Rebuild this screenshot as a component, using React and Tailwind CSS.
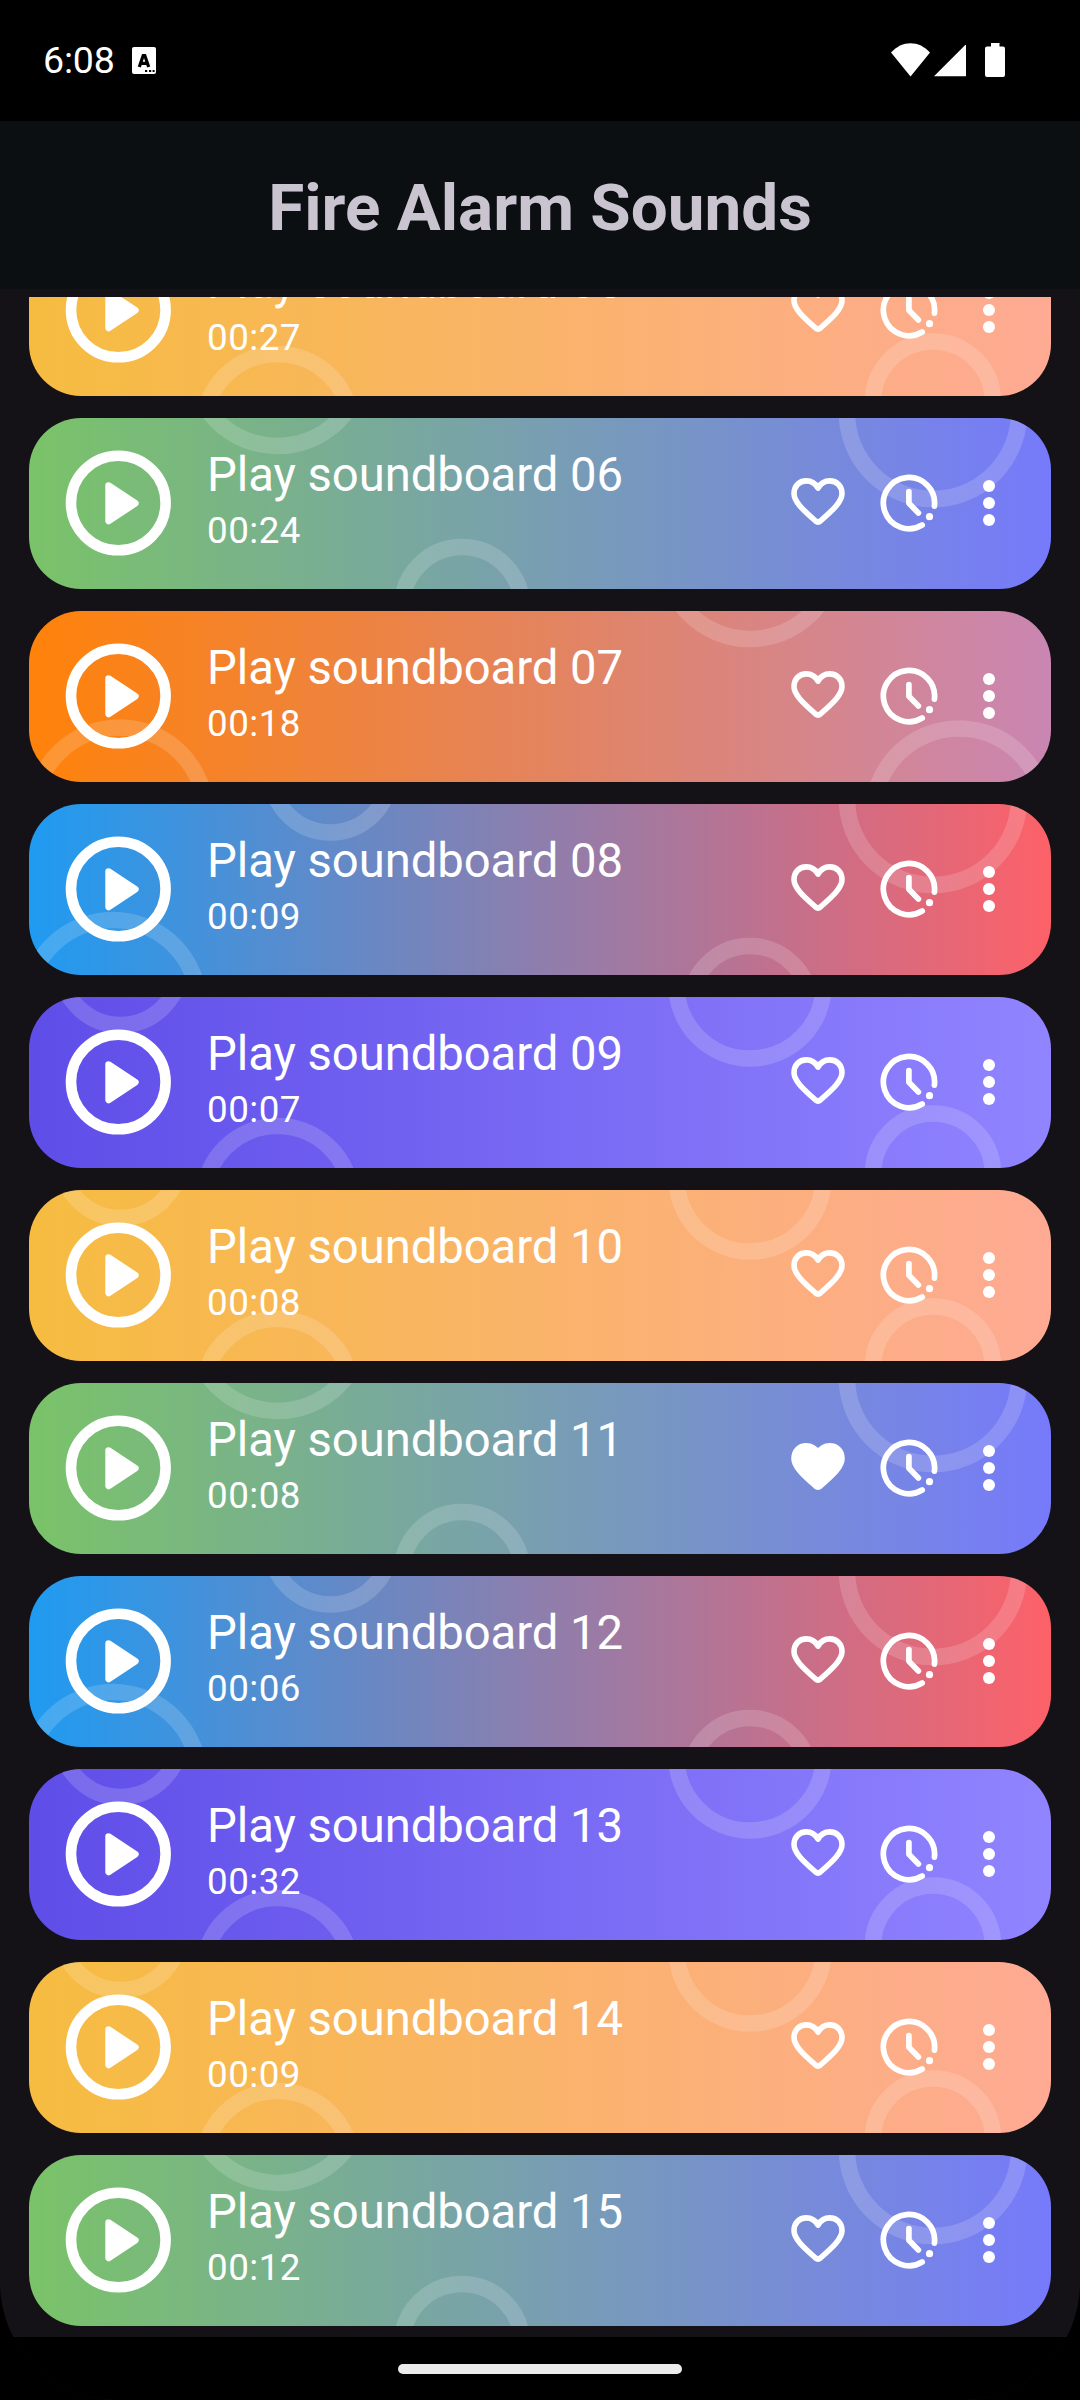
const THEMES = {
  yellow: {
    bg: "bg-[linear-gradient(90deg,#f6bc40,#feaa94)]",
    rings: [
      [91.5, -32, 60],
      [721, -12, 73.5],
      [248.5, 203, 74],
      [904, 176.5, 60],
    ],
  },
  green: {
    bg: "bg-[linear-gradient(90deg,#7ac368,#767afb)]",
    rings: [
      [248.5, -58, 86],
      [904, -5, 86],
      [433, 189, 60],
    ],
  },
  orange: {
    bg: "bg-[linear-gradient(90deg,#ff820a,#c986b2)]",
    rings: [
      [721, -58, 86],
      [90.5, 202.5, 86],
      [930, 203.5, 86],
    ],
  },
  blue: {
    bg: "bg-[linear-gradient(90deg,#1f9bf1,#fd6168)]",
    rings: [
      [301.5, -31.5, 60],
      [904, -5, 86],
      [84, 202, 86],
      [721, 202, 60],
    ],
  },
  purple: {
    bg: "bg-[linear-gradient(90deg,#5f4de8,#9184ff)]",
    rings: [
      [91.5, -32, 60],
      [721, -12, 73.5],
      [248.5, 203, 74],
      [904, 176.5, 60],
    ],
  },
};

const SOUNDS = [
  { id: "05", time: "00:27", theme: "yellow" },
  { id: "06", time: "00:24", theme: "green" },
  { id: "07", time: "00:18", theme: "orange" },
  { id: "08", time: "00:09", theme: "blue" },
  { id: "09", time: "00:07", theme: "purple" },
  { id: "10", time: "00:08", theme: "yellow" },
  { id: "11", time: "00:08", theme: "green", liked: true },
  { id: "12", time: "00:06", theme: "blue" },
  { id: "13", time: "00:32", theme: "purple" },
  { id: "14", time: "00:09", theme: "yellow" },
  { id: "15", time: "00:12", theme: "green" },
];

function StatusBar() {
  return (
    <header className="flex h-[121px] shrink-0 items-center justify-between bg-black pr-[75px] pb-[1px] pl-[43px] text-white">
      <div className="flex items-center">
        <span className="text-[37.5px] leading-[44px] tracking-[-0.2px]">6:08</span>
        <svg className="ml-[17px] h-[27px] w-[24px]" viewBox="0 0 24 27">
          <rect width="24" height="27" rx="2" fill="#fff" />
          <path
            d="M7.3 20 L11.2 8.5 H12.8 L16.7 20 M8.8 16.3 H15.2"
            fill="none"
            stroke="#000"
            strokeWidth="3.2"
          />
          <path d="M13 23h2.2v2H13zM17 23h2.2v2H17zM20.6 23h2v2h-2z" fill="#000" />
        </svg>
      </div>
      <div className="flex items-center">
        <svg className="h-[34px] w-[39px]" viewBox="0 0 39 34" fill="#fff">
          <path d="M0 9.5 C11 -3 28 -3 39 9.5 L19.5 33.5 Z" />
        </svg>
        <svg className="ml-[3.5px] h-[34px] w-[32.5px]" viewBox="0 0 33 34" fill="#fff">
          <path d="M33 0.5 V33.5 H0 Z" />
        </svg>
        <svg className="ml-[19px] h-[34px] w-[20px]" viewBox="0 0 20 34" fill="#fff">
          <rect x="6" y="0" width="8.5" height="6" />
          <rect x="0" y="3.5" width="20" height="30.5" rx="2" />
        </svg>
      </div>
    </header>
  );
}

function PlayIcon() {
  return (
    <svg className="h-[106px] w-[106px] shrink-0" viewBox="0 0 106 106">
      <circle cx="53.3" cy="53" r="47.3" fill="none" stroke="#fff" strokeWidth="10.6" />
      <path
        d="M43.6 35.6 L70.4 53.3 L43.6 71 Z"
        fill="#fff"
        stroke="#fff"
        strokeWidth="6.6"
        strokeLinejoin="round"
      />
    </svg>
  );
}

function HeartIcon({ filled }) {
  return (
    <svg className="-mr-[1px] mb-[3px] h-[47px] w-[54px] shrink-0" viewBox="0 0 54 47">
      <path
        d="M27 10 C24.5 5.6 20 2.9 15.3 2.9 C8 2.9 3 8.2 3 15.5 C3 23.5 11.5 31.5 24.6 43 Q27 45 29.4 43 C42.5 31.5 51 23.5 51 15.5 C51 8.2 46 2.9 38.7 2.9 C34 2.9 29.5 5.6 27 10 Z"
        fill={filled ? "#fff" : "none"}
        stroke="#fff"
        strokeWidth="5.6"
        strokeLinejoin="round"
      />
    </svg>
  );
}

function ClockIcon() {
  return (
    <svg
      className="ml-[36px] h-[58px] w-[58px] shrink-0"
      viewBox="0 0 58 58"
      fill="none"
      stroke="#fff"
      strokeWidth="5.7"
      strokeLinecap="round"
      strokeLinejoin="round"
    >
      <path d="M54.4 32.2 A25.6 25.6 0 1 0 42.2 51" />
      <path d="M28.9 17.5 V29.3 L38.4 39" />
      <circle cx="49.5" cy="42.7" r="3.6" fill="#fff" stroke="none" />
    </svg>
  );
}

function MoreIcon() {
  return (
    <svg className="ml-[44px] h-[48px] w-[14px] shrink-0" viewBox="0 0 14 48" fill="#fff">
      <circle cx="7" cy="7" r="6" />
      <circle cx="7" cy="24" r="6" />
      <circle cx="7" cy="41" r="6" />
    </svg>
  );
}

function SoundCard({ sound }) {
  const theme = THEMES[sound.theme];
  return (
    <li className={`relative h-[171px] shrink-0 overflow-hidden rounded-[52px] ${theme.bg}`}>
      <svg className="absolute inset-0 h-full w-full" viewBox="0 0 1022 171" fill="none">
        {theme.rings.map(([cx, cy, r]) => (
          <circle
            key={`${cx}:${cy}`}
            cx={cx}
            cy={cy}
            r={r}
            stroke="#fff"
            strokeOpacity="0.16"
            strokeWidth="16.5"
          />
        ))}
      </svg>
      <div className="relative flex h-full items-center pr-[55px] pb-[2px] pl-[36px] text-white">
        <PlayIcon />
        <div className="ml-[36px] flex h-full flex-1 flex-col pt-[29px]">
          <span className="text-[47.25px] leading-[56px] tracking-[-0.06px]">
            Play soundboard {sound.id}
          </span>
          <span className="mt-[6px] text-[36.75px] leading-[43px] tracking-[0.5px]">{sound.time}</span>
        </div>
        <HeartIcon filled={sound.liked} />
        <ClockIcon />
        <MoreIcon />
      </div>
    </li>
  );
}

export default function App() {
  return (
    <div className="h-[2400px] w-[1080px] bg-black font-['Roboto',sans-serif]">
      <div className="flex h-full flex-col overflow-hidden rounded-b-[117px] bg-[#141117]">
        <StatusBar />
        <div className="flex h-[168px] shrink-0 items-center justify-center bg-[#0c0f12] pt-[6px]">
          <h1 className="text-[65.6px] leading-[76px] font-bold text-[#cac4d0]">Fire Alarm Sounds</h1>
        </div>
        <main className="mt-[8px] h-[2040px] shrink-0 overflow-hidden px-[29px]">
          <ul className="-mt-[72px] flex flex-col gap-[22px]">
            {SOUNDS.map((s) => (
              <SoundCard key={s.id} sound={s} />
            ))}
          </ul>
        </main>
        <footer className="flex flex-1 justify-center bg-black pt-[27px]">
          <div className="h-[10px] w-[284px] rounded-full bg-[#ebebeb]" />
        </footer>
      </div>
    </div>
  );
}
